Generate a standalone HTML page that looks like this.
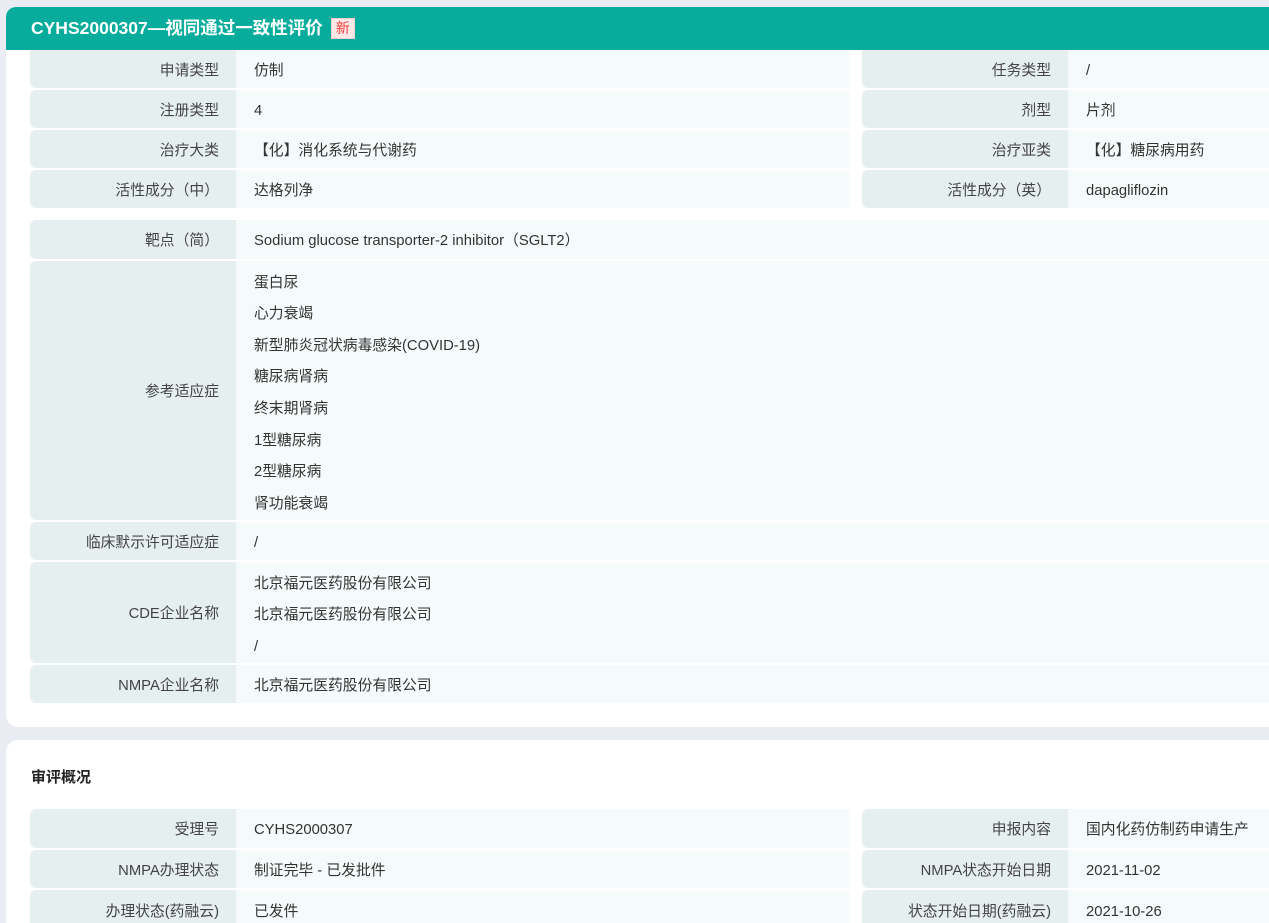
<!DOCTYPE html>
<html><head><meta charset="utf-8"><style>
*{margin:0;padding:0;box-sizing:border-box}
html,body{width:1269px;height:923px;overflow:hidden}
body{background:#e9edf3;font-family:"Liberation Sans","Noto Sans CJK SC",sans-serif;font-size:14.8px;color:#333;position:relative}
.card{position:absolute;left:6px;width:1290px;background:#fff;border-radius:12px}
.hd{position:absolute;left:6px;top:7px;width:1290px;height:43px;background:#08ac9d;border-radius:10px 10px 0 0;color:#fff;font-weight:bold;font-size:17.5px;line-height:43px;padding-left:25px}
.hd span{display:inline-block;background:#fde8e8;color:#f03c3c;font-weight:normal;font-size:14px;line-height:19px;padding:0 4px;margin-left:8px;vertical-align:1px;border:1px solid #f8caca}
.l,.v{position:absolute;display:flex;align-items:center}
.l>span,.v>span{display:block;line-height:20px;height:20px;margin-top:3px}
.l{background:#e6eff0;justify-content:flex-end;padding-right:17px;border-radius:6px 0 0 6px;color:#444}
.v{background:#f5fbfb;padding-left:18px}
.ml{flex-direction:column;align-items:flex-start;justify-content:center;padding-top:7px}
.ml>div{height:31.6px;line-height:31.6px}
.t{position:absolute;left:31px;top:766px;font-weight:bold;font-size:15px;color:#222}
</style></head><body>
<div class="card" style="top:7px;height:720px"></div>
<div class="card" style="top:740px;height:200px"></div>
<div class="hd">CYHS2000307—视同通过一致性评价<span>新</span></div>
<div class="v" style="left:236px;top:50px;width:614px;height:38px"><span>仿制</span></div>
<div class="l" style="left:30px;top:50px;width:206px;height:38px;border-radius:0 0 0 6px"><span>申请类型</span></div>
<div class="l" style="left:862px;top:50px;width:206px;height:38px;border-radius:0 0 0 6px"><span>任务类型</span></div>
<div class="v" style="left:1068px;top:50px;width:210px;height:38px"><span>/</span></div>
<div class="l" style="left:30px;top:90px;width:206px;height:38px"><span>注册类型</span></div>
<div class="v" style="left:236px;top:90px;width:614px;height:38px"><span>4</span></div>
<div class="l" style="left:862px;top:90px;width:206px;height:38px"><span>剂型</span></div>
<div class="v" style="left:1068px;top:90px;width:210px;height:38px"><span>片剂</span></div>
<div class="l" style="left:30px;top:130px;width:206px;height:38px"><span>治疗大类</span></div>
<div class="v" style="left:236px;top:130px;width:614px;height:38px"><span>【化】消化系统与代谢药</span></div>
<div class="l" style="left:862px;top:130px;width:206px;height:38px"><span>治疗亚类</span></div>
<div class="v" style="left:1068px;top:130px;width:210px;height:38px"><span>【化】糖尿病用药</span></div>
<div class="l" style="left:30px;top:170px;width:206px;height:38px"><span>活性成分（中）</span></div>
<div class="v" style="left:236px;top:170px;width:614px;height:38px"><span>达格列净</span></div>
<div class="l" style="left:862px;top:170px;width:206px;height:38px"><span>活性成分（英）</span></div>
<div class="v" style="left:1068px;top:170px;width:210px;height:38px"><span>dapagliflozin</span></div>
<div class="l" style="left:30px;top:220px;width:206px;height:39px"><span>靶点（简）</span></div>
<div class="v" style="left:236px;top:220px;width:1050px;height:39px"><span>Sodium glucose transporter-2 inhibitor（SGLT2）</span></div>
<div class="l" style="left:30px;top:261px;width:206px;height:259px"><span>参考适应症</span></div>
<div class="v ml" style="left:236px;top:261px;width:1050px;height:259px"><div>蛋白尿</div><div>心力衰竭</div><div>新型肺炎冠状病毒感染(COVID-19)</div><div>糖尿病肾病</div><div>终末期肾病</div><div>1型糖尿病</div><div>2型糖尿病</div><div>肾功能衰竭</div></div>
<div class="l" style="left:30px;top:522px;width:206px;height:38px"><span>临床默示许可适应症</span></div>
<div class="v" style="left:236px;top:522px;width:1050px;height:38px"><span>/</span></div>
<div class="l" style="left:30px;top:562px;width:206px;height:101px"><span>CDE企业名称</span></div>
<div class="v ml" style="left:236px;top:562px;width:1050px;height:101px"><div>北京福元医药股份有限公司</div><div>北京福元医药股份有限公司</div><div>/</div></div>
<div class="l" style="left:30px;top:665px;width:206px;height:38px"><span>NMPA企业名称</span></div>
<div class="v" style="left:236px;top:665px;width:1050px;height:38px"><span>北京福元医药股份有限公司</span></div>
<div class="t">审评概况</div>
<div class="l" style="left:30px;top:809px;width:206px;height:39px"><span>受理号</span></div>
<div class="v" style="left:236px;top:809px;width:614px;height:39px"><span>CYHS2000307</span></div>
<div class="l" style="left:862px;top:809px;width:206px;height:39px"><span>申报内容</span></div>
<div class="v" style="left:1068px;top:809px;width:210px;height:39px"><span>国内化药仿制药申请生产</span></div>
<div class="l" style="left:30px;top:850px;width:206px;height:38px"><span>NMPA办理状态</span></div>
<div class="v" style="left:236px;top:850px;width:614px;height:38px"><span>制证完毕 - 已发批件</span></div>
<div class="l" style="left:862px;top:850px;width:206px;height:38px"><span>NMPA状态开始日期</span></div>
<div class="v" style="left:1068px;top:850px;width:210px;height:38px"><span>2021-11-02</span></div>
<div class="l" style="left:30px;top:890px;width:206px;height:40px"><span>办理状态(药融云)</span></div>
<div class="v" style="left:236px;top:890px;width:614px;height:40px"><span>已发件</span></div>
<div class="l" style="left:862px;top:890px;width:206px;height:40px"><span>状态开始日期(药融云)</span></div>
<div class="v" style="left:1068px;top:890px;width:210px;height:40px"><span>2021-10-26</span></div>
</body></html>
